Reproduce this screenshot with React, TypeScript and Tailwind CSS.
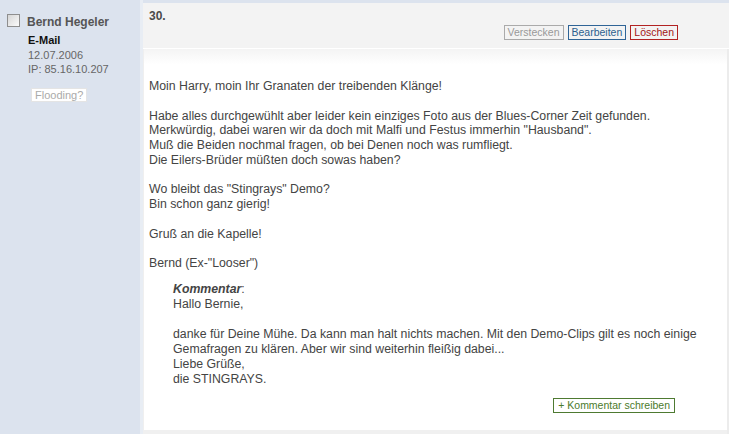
const font = { fontFamily: '"Liberation Sans", Arial, sans-serif' }

const Sidebar = () => {
  return (
    <aside className="w-[140px] shrink-0 pt-[14px] pl-[7px]">
      <div className="flex items-start gap-[7px]">
        <span className="mt-0 h-[13px] w-[13px] border border-[#8e8e8e] bg-gradient-to-br from-[#d6d6d6] to-[#fbfbfb]" />
        <span className="mt-[1px] text-[12px] font-bold leading-[15px] text-[#555]">Bernd Hegeler</span>
      </div>
      <div className="mt-[3px] pl-[21px] text-[11px] leading-[14.5px]">
        <div className="font-bold text-[#111]">E-Mail</div>
        <div className="text-[#666]">12.07.2006</div>
        <div className="text-[#666]">IP: 85.16.10.207</div>
        <button className="ml-[3px] mt-[11px] h-[14px] border border-[#e4e4e4] bg-white px-[3px] text-[11px] leading-[12px] text-[#aaa]">
          Flooding?
        </button>
      </div>
    </aside>
  )
}

const Header = () => {
  return (
    <div className="flex h-[46px] shrink-0 flex-col border-b border-white bg-[#f3f3f3] pl-[6px] pr-[51px]">
      <div className="pt-[6px] text-[12px] font-bold leading-[14px] text-[#4a4a4a]">30.</div>
      <div className="mt-[2px] flex justify-end gap-[4px] text-[10.5px] leading-[13px]">
        <button className="h-[15px] border border-[#aaa] px-[3px] text-[#999]">Verstecken</button>
        <button className="h-[15px] border border-[#2f6496] px-[3px] text-[#2d5f8e]">Bearbeiten</button>
        <button className="h-[15px] border border-[#b22222] px-[3px] text-[#a31515]">Löschen</button>
      </div>
    </div>
  )
}

const App = () => {
  return (
    <main style={font} className="flex h-[434px] w-[729px] overflow-hidden bg-[#dce3ee]">
      <Sidebar />
      <div className="flex flex-1 flex-col border-l-[3px] border-l-[#e8edf4] pt-[3px]">
        <Header />
        <div className="flex flex-1 flex-col border-r-[2px] border-r-[#ececec] bg-gradient-to-b from-[#f4f4f4] via-white via-[4%] to-white">
          <div className="flex-1 border-l border-l-[#efefef] pl-[5px] pt-[30px] text-[12.3px] leading-[14.75px] text-[#444]">
            <p>Moin Harry, moin Ihr Granaten der treibenden Klänge!</p>
            <br />
            <p>
              Habe alles durchgewühlt aber leider kein einziges Foto aus der Blues-Corner Zeit gefunden.
              <br />
              Merkwürdig, dabei waren wir da doch mit Malfi und Festus immerhin "Hausband".
              <br />
              Muß die Beiden nochmal fragen, ob bei Denen noch was rumfliegt.
              <br />
              Die Eilers-Brüder müßten doch sowas haben?
            </p>
            <br />
            <p>
              Wo bleibt das "Stingrays" Demo?
              <br />
              Bin schon ganz gierig!
            </p>
            <br />
            <p>Gruß an die Kapelle!</p>
            <br />
            <p>Bernd (Ex-"Looser")</p>
            <div className="mt-[11px] pl-[24px] leading-[15px]">
              <p>
                <em className="font-bold">Kommentar</em>:
              </p>
              <p>Hallo Bernie,</p>
              <br />
              <p>
                danke für Deine Mühe. Da kann man halt nichts machen. Mit den Demo-Clips gilt es noch einige
                <br />
                Gemafragen zu klären. Aber wir sind weiterhin fleißig dabei...
                <br />
                Liebe Grüße,
                <br />
                die STINGRAYS.
              </p>
              <div className="mt-[11px] flex justify-end pr-[52px]">
                <button className="h-[15px] border border-[#4e7a31] px-[4px] text-[10.5px] leading-[13px] text-[#4b7a2c]">
                  + Kommentar schreiben
                </button>
              </div>
            </div>
          </div>
          <div className="h-[4px] shrink-0 bg-[#f0f0f0]" />
        </div>
      </div>
    </main>
  )
}

export default App
